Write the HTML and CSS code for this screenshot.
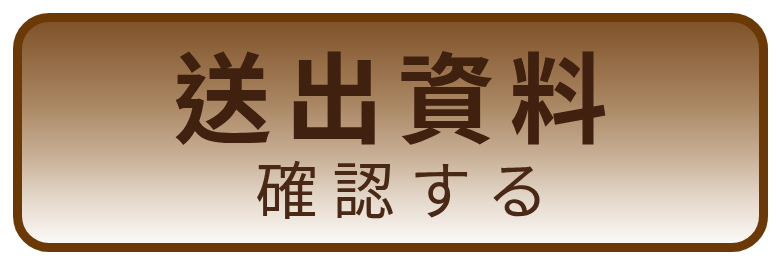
FILE: index.html
```html
<!DOCTYPE html>
<html lang="zh-Hant">
<head>
<meta charset="utf-8">
<link rel="stylesheet" href="styles.css">
</head>
<body>
<div class="btn">
  <div class="title">送出資料</div>
  <div class="sub" lang="ja">確認する</div>
</div>
</body>
</html>
```
FILE: styles.css
```css
html, body {
  margin: 0;
  padding: 0;
  background: #ffffff;
}
body {
  width: 780px;
  height: 264px;
  padding: 13px 12px 12px 13px;
  box-sizing: border-box;
}
.btn {
  box-sizing: border-box;
  width: 755px;
  height: 239px;
  border: 9px solid #6b3906;
  border-radius: 36px;
  background: linear-gradient(to bottom, #80532a 0%, #a7835f 35%, #c7ae94 60%, #e4d8cb 80%, #fbf9f7 100%);
  display: flex;
  flex-direction: column;
  align-items: center;
  font-family: "Noto Sans CJK TC", "Noto Sans CJK JP", sans-serif;
}
.title {
  margin-top: 21px;
  font-size: 98px;
  font-weight: 700;
  line-height: 1;
  letter-spacing: 14px;
  padding-left: 14px;
  color: #40200f;
}
.sub {
  margin-top: 15px;
  font-size: 62px;
  font-weight: 400;
  line-height: 1;
  letter-spacing: 15px;
  padding-left: 38px;
  color: #4a2816;
}
```
